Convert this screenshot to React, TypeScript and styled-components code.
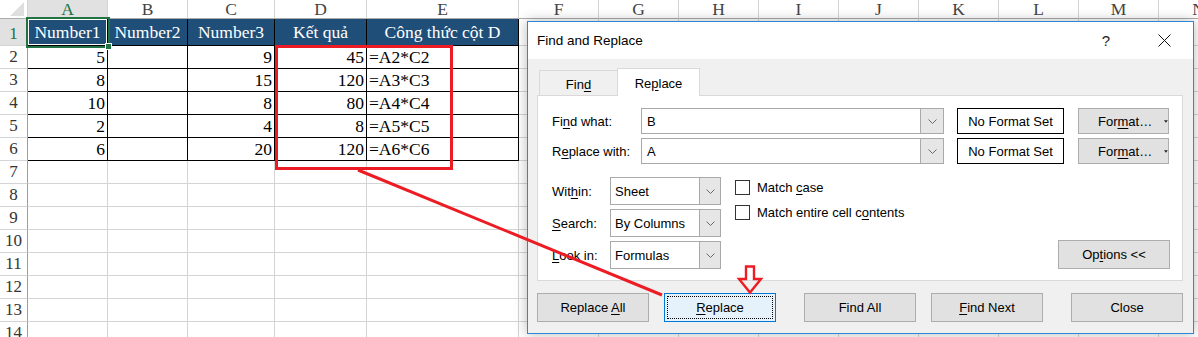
import React from 'react';
import styled, { createGlobalStyle, css } from 'styled-components';

const GlobalStyle = createGlobalStyle`
  html, body {
    margin: 0;
    padding: 0;
    background: #fff;
    overflow: hidden;
  }
`;

const COLS = [80, 80, 87, 92, 152, 80, 80, 80, 80, 80, 80, 80, 80, 80];
const LETTERS = 'ABCDEFGHIJKLMN'.split('');
const ROW_COUNT = 14;

const DATA: string[][] = [
  ['Number1', 'Number2', 'Number3', 'Kết quả', 'Công thức cột D'],
  ['5', '', '9', '45', '=A2*C2'],
  ['8', '', '15', '120', '=A3*C3'],
  ['10', '', '8', '80', '=A4*C4'],
  ['2', '', '4', '8', '=A5*C5'],
  ['6', '', '20', '120', '=A6*C6'],
];

const Page = styled.div`
  position: relative;
  width: 1198px;
  height: 337px;
  overflow: hidden;
  font-family: 'Liberation Serif', 'Times New Roman', serif;
`;

/* ---------- sheet ---------- */

const Grid = styled.div`
  display: grid;
  grid-template-columns: 28px ${COLS.map((c) => `${c}px`).join(' ')};
  grid-template-rows: 19px 27px repeat(${ROW_COUNT - 1}, 23px);
  width: max-content;
`;

const Corner = styled.div`
  position: relative;
  box-sizing: border-box;
  background: #fff;
  border-right: 1px solid #d4d4d4;
  border-bottom: 1px solid #ababab;

  &::after {
    content: '';
    position: absolute;
    right: 3px;
    bottom: 2px;
    width: 0;
    height: 0;
    border-left: 14px solid transparent;
    border-bottom: 14px solid #dfdfdf;
  }
`;

const ColHead = styled.div<{ $active?: boolean }>`
  box-sizing: border-box;
  display: flex;
  align-items: center;
  justify-content: center;
  font-size: 17.5px;
  line-height: 1;
  padding-top: 2px;
  color: ${(p) => (p.$active ? '#217346' : '#444')};
  background: ${(p) => (p.$active ? '#e1e1e1' : '#fff')};
  border-right: 1px solid #d4d4d4;
  border-bottom: 1px solid #ababab;
`;

const RowHead = styled.div<{ $active?: boolean }>`
  box-sizing: border-box;
  display: flex;
  align-items: flex-end;
  justify-content: center;
  font-size: 17px;
  line-height: 1;
  padding-bottom: 3px;
  color: ${(p) => (p.$active ? '#217346' : '#333')};
  background: ${(p) => (p.$active ? '#e1e1e1' : '#fff')};
  border-right: 1px solid #9e9e9e;
  border-bottom: 1px solid #d4d4d4;
`;

type Kind = 'title' | 'data' | 'empty';

const Cell = styled.div<{ $kind: Kind; $align: 'left' | 'right' | 'center'; $selected?: boolean }>`
  box-sizing: border-box;
  display: flex;
  align-items: flex-end;
  justify-content: ${(p) =>
    p.$align === 'right' ? 'flex-end' : p.$align === 'left' ? 'flex-start' : 'center'};
  padding: 0 2px 2px;
  font-size: 17.5px;
  line-height: 1;
  white-space: nowrap;
  color: #000;
  border-right: 1px solid #d4d4d4;
  border-bottom: 1px solid #d4d4d4;

  ${(p) =>
    p.$kind === 'data' &&
    css`
      border-right-color: #000;
      border-bottom-color: #000;
    `}

  ${(p) =>
    p.$kind === 'title' &&
    css`
      background: #1f4e78;
      color: #fff;
      padding-bottom: 4px;
      border-right-color: #000;
      border-bottom-color: #000;
    `}

  ${(p) =>
    p.$selected &&
    css`
      position: relative;
      z-index: 2;
      box-shadow: 0 0 0 2px #217346, inset 0 0 0 1px #fff;

      &::after {
        content: '';
        position: absolute;
        right: -5px;
        bottom: -5px;
        width: 5px;
        height: 5px;
        background: #217346;
        border: 1px solid #fff;
      }
    `}
`;

const Sheet = () => {
  const rows = Array.from({ length: ROW_COUNT }, (_, i) => i);
  return (
    <Grid>
      <Corner />
      {LETTERS.map((l, i) => (
        <ColHead key={`col-${l}`} $active={i === 0}>
          {l}
        </ColHead>
      ))}
      {rows.map((r) => (
        <React.Fragment key={`row-${r}`}>
          <RowHead $active={r === 0}>{r + 1}</RowHead>
          {LETTERS.map((l, c) => {
            const value = DATA[r]?.[c];
            const inTable = value !== undefined;
            const kind: Kind = !inTable ? 'empty' : r === 0 ? 'title' : 'data';
            const align = r === 0 ? 'center' : c === 4 ? 'left' : 'right';
            return (
              <Cell key={`${l}${r}`} $kind={kind} $align={align} $selected={r === 0 && c === 0}>
                {value}
              </Cell>
            );
          })}
        </React.Fragment>
      ))}
    </Grid>
  );
};

/* ---------- dialog ---------- */

const Dialog = styled.div`
  position: absolute;
  left: 527px;
  top: 21px;
  width: 667px;
  height: 313px;
  box-sizing: border-box;
  display: flex;
  flex-direction: column;
  background: #f0f0f0;
  border: 1px solid #2b88d8;
  box-shadow: 0 0 12px rgba(0, 0, 0, 0.28);
  font-family: 'Liberation Sans', Arial, sans-serif;
  font-size: 13px;
  color: #000;
  z-index: 5;
`;

const TitleBar = styled.div`
  height: 37px;
  flex: none;
  display: flex;
  align-items: center;
  padding: 0 9px;
  background: #fff;
`;

const Title = styled.div`
  flex: 1;
  font-size: 13.5px;
`;

const CaptionButtons = styled.div`
  display: flex;
  gap: 18px;
`;

const CaptionButton = styled.div`
  width: 40px;
  height: 30px;
  display: flex;
  align-items: center;
  justify-content: center;
  font-size: 15px;
  color: #222;
`;

const Body = styled.div`
  flex: 1;
  display: flex;
  flex-direction: column;
  padding: 9px 10px 0 9px;
`;

const TabStrip = styled.div`
  height: 27px;
  display: flex;
  align-items: flex-end;
  padding-left: 2px;
`;

const Tab = styled.div<{ $active?: boolean }>`
  box-sizing: border-box;
  display: flex;
  align-items: center;
  justify-content: center;
  padding-top: 2px;
  border: 1px solid #d9d9d9;
  border-bottom: none;
  ${(p) =>
    p.$active
      ? css`
          position: relative;
          z-index: 1;
          width: 83px;
          height: 28px;
          margin-bottom: -1px;
          background: #fff;
        `
      : css`
          width: 78px;
          height: 25px;
          border-right: none;
          background: #f0f0f0;
        `}
`;

const Panel = styled.div`
  box-sizing: border-box;
  height: 186px;
  background: #fff;
  border: 1px solid #d9d9d9;
  padding: 12px 12px 11px 14px;
  display: flex;
  flex-direction: column;
`;

const FieldGrid = styled.div`
  display: grid;
  grid-template-columns: 76px 303px 107px 92px;
  grid-auto-rows: 26px;
  row-gap: 4px;
  column-gap: 13px;
  align-items: stretch;

  & > :nth-child(4n) {
    margin-left: 1px;
  }
`;

const Label = styled.div`
  display: flex;
  align-items: center;
  white-space: nowrap;
`;

const U = styled.span`
  text-decoration: underline;
  text-underline-offset: 2px;
`;

const Combo = styled.div`
  box-sizing: border-box;
  display: flex;
  border: 1px solid #a9a9a9;
  background: #fff;
`;

const ComboText = styled.div<{ $pad?: number }>`
  flex: 1;
  display: flex;
  align-items: center;
  padding-left: ${(p) => p.$pad ?? 5}px;
`;

const ComboArrow = styled.div<{ $w: number }>`
  width: ${(p) => p.$w}px;
  flex: none;
  display: flex;
  align-items: center;
  justify-content: center;
  background: #e6e6e6;
  border-left: 1px solid #a9a9a9;
`;

const FormatBox = styled.div`
  box-sizing: border-box;
  display: flex;
  align-items: center;
  justify-content: center;
  border: 1px solid #000;
  white-space: nowrap;
`;

const Button = styled.div<{ $w?: number; $h?: number; $focused?: boolean; $spaced?: boolean }>`
  position: relative;
  box-sizing: border-box;
  width: ${(p) => (p.$w ? `${p.$w}px` : 'auto')};
  height: ${(p) => (p.$h ? `${p.$h}px` : 'auto')};
  display: flex;
  align-items: center;
  justify-content: center;
  white-space: nowrap;
  background: #e1e1e1;
  border: 1px solid #adadad;
  margin-left: ${(p) => (p.$spaced ? 13 : 0)}px;

  ${(p) =>
    p.$focused &&
    css`
      background: #e5f1fb;
      border-color: #0078d7;

      &::after {
        content: '';
        position: absolute;
        inset: 2px;
        border: 1px dotted #000;
      }
    `}
`;

const FormatButton = styled(Button)`
  justify-content: flex-start;
  padding: 0 0 0 19px;
  gap: 12px;
`;

const Lower = styled.div`
  margin-top: 13px;
  display: flex;
  flex: 1;
`;

const SelectGrid = styled.div`
  display: grid;
  grid-template-columns: 58px 111px;
  grid-auto-rows: 28px;
  row-gap: 4px;
`;

const Checks = styled.div`
  margin-left: 14px;
  padding-top: 3px;
  display: flex;
  flex-direction: column;
  gap: 10px;
`;

const CheckRow = styled.div`
  display: flex;
  align-items: center;
  gap: 7px;
  height: 15px;
  white-space: nowrap;
`;

const CheckBox = styled.div`
  box-sizing: border-box;
  width: 15px;
  height: 15px;
  border: 1px solid #333;
  background: #fff;
`;

const OptionsButton = styled(Button)`
  margin-left: auto;
  align-self: flex-end;
  margin-bottom: 0;
`;

const ButtonRow = styled.div`
  margin-top: 12px;
  display: flex;
  gap: 15px;
`;

const Chevron = () => (
  <svg width="9" height="5" viewBox="0 0 9 5">
    <polyline points="0.5,0.5 4.5,4.5 8.5,0.5" fill="none" stroke="#6a6a6a" strokeWidth="1" />
  </svg>
);

const CloseGlyph = () => (
  <svg width="13" height="13" viewBox="0 0 13 13">
    <path d="M0.5 0.5 L12.5 12.5 M12.5 0.5 L0.5 12.5" stroke="#111" strokeWidth="1" />
  </svg>
);

const DropTriangle = () => (
  <svg width="5" height="3" viewBox="0 0 5 3">
    <polygon points="0,0 5,0 2.5,3" fill="#222" />
  </svg>
);

const ComboField = ({ value }: { value: string }) => (
  <Combo>
    <ComboText>{value}</ComboText>
    <ComboArrow $w={22}>
      <Chevron />
    </ComboArrow>
  </Combo>
);

const SelectField = ({ value }: { value: string }) => (
  <Combo>
    <ComboText $pad={4}>{value}</ComboText>
    <ComboArrow $w={20}>
      <Chevron />
    </ComboArrow>
  </Combo>
);

const FindReplaceDialog = () => (
  <Dialog>
    <TitleBar>
      <Title>Find and Replace</Title>
      <CaptionButtons>
        <CaptionButton>?</CaptionButton>
        <CaptionButton>
          <CloseGlyph />
        </CaptionButton>
      </CaptionButtons>
    </TitleBar>
    <Body>
      <TabStrip>
        <Tab>
          <span>
            Fin<U>d</U>
          </span>
        </Tab>
        <Tab $active>
          <span>
            Re<U>p</U>lace
          </span>
        </Tab>
      </TabStrip>
      <Panel>
        <FieldGrid>
          <Label>
            <span>
              Fi<U>n</U>d what:
            </span>
          </Label>
          <ComboField value="B" />
          <FormatBox>No Format Set</FormatBox>
          <FormatButton>
            <span>
              For<U>m</U>at…
            </span>
            <DropTriangle />
          </FormatButton>
          <Label>
            <span>
              R<U>e</U>place with:
            </span>
          </Label>
          <ComboField value="A" />
          <FormatBox>No Format Set</FormatBox>
          <FormatButton>
            <span>
              For<U>m</U>at…
            </span>
            <DropTriangle />
          </FormatButton>
        </FieldGrid>
        <Lower>
          <SelectGrid>
            <Label>
              <span>
                Wit<U>h</U>in:
              </span>
            </Label>
            <SelectField value="Sheet" />
            <Label>
              <span>
                <U>S</U>earch:
              </span>
            </Label>
            <SelectField value="By Columns" />
            <Label>
              <span>
                <U>L</U>ook in:
              </span>
            </Label>
            <SelectField value="Formulas" />
          </SelectGrid>
          <Checks>
            <CheckRow>
              <CheckBox />
              <span>
                Match <U>c</U>ase
              </span>
            </CheckRow>
            <CheckRow>
              <CheckBox />
              <span>
                Match entire cell c<U>o</U>ntents
              </span>
            </CheckRow>
          </Checks>
          <OptionsButton $w={112} $h={29}>
            <span>
              Op<U>t</U>ions &lt;&lt;
            </span>
          </OptionsButton>
        </Lower>
      </Panel>
      <ButtonRow>
        <Button $w={112} $h={29}>
          <span>
            Replace <U>A</U>ll
          </span>
        </Button>
        <Button $w={112} $h={29} $focused>
          <span>
            <U>R</U>eplace
          </span>
        </Button>
        <Button $w={112} $h={29} $spaced>
          Find All
        </Button>
        <Button $w={112} $h={29}>
          <span>
            <U>F</U>ind Next
          </span>
        </Button>
        <Button $w={112} $h={29} $spaced>
          Close
        </Button>
      </ButtonRow>
    </Body>
  </Dialog>
);

/* ---------- red annotations ---------- */

const Overlay = styled.svg`
  position: absolute;
  left: 0;
  top: 0;
  z-index: 10;
  pointer-events: none;
`;

const Annotations = () => (
  <Overlay width="1198" height="337" viewBox="0 0 1198 337">
    <rect x="276.5" y="46.5" width="175" height="122" fill="none" stroke="#ed1c24" strokeWidth="3" />
    <line x1="358" y1="170" x2="662" y2="295" stroke="#ed1c24" strokeWidth="3" />
    <polygon
      points="746,266.5 754,266.5 754,279 761,279 750,292.5 739,279 746,279"
      fill="none"
      stroke="#ed1c24"
      strokeWidth="2.4"
      strokeLinejoin="miter"
    />
  </Overlay>
);

const App = () => (
  <Page>
    <GlobalStyle />
    <Sheet />
    <FindReplaceDialog />
    <Annotations />
  </Page>
);

export default App;
